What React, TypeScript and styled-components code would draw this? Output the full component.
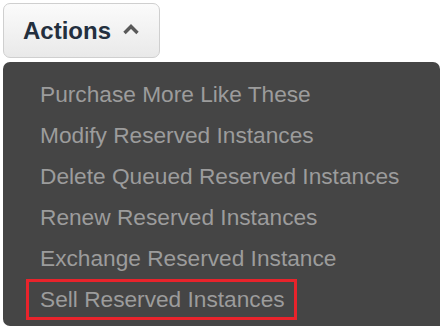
import React from "react";
import styled, { createGlobalStyle } from "styled-components";

const Global = createGlobalStyle`
  html, body { margin: 0; padding: 0; background: #ffffff; }
  body { font-family: "Liberation Sans", Arial, sans-serif; }
`;

const Page = styled.div`
  width: 440px;
  height: 326px;
  overflow: hidden;
  padding: 3px 0 0 3px;
  box-sizing: border-box;
  display: flex;
  flex-direction: column;
  gap: 4px;
`;

const Button = styled.button`
  width: 157px;
  height: 55px;
  box-sizing: border-box;
  border: 1px solid #cfcfcf;
  border-radius: 7px;
  background: linear-gradient(#fbfbfb, #e9e9e9);
  display: flex;
  align-items: center;
  padding: 0 0 0 19px;
  gap: 11px;
  font-family: "Liberation Sans", Arial, sans-serif;
  font-weight: bold;
  font-size: 24px;
  color: #232f3e;
  cursor: pointer;
`;

const Caret = styled.svg`
  width: 18px;
  height: 12px;
  margin-top: -3px;
`;

const Menu = styled.ul`
  list-style: none;
  margin: 0;
  padding: 12px 0 0 23px;
  flex: 1;
  width: 437px;
  box-sizing: border-box;
  background: #454545;
  border-radius: 7px 7px 0 7px;
  display: flex;
  flex-direction: column;
  align-items: flex-start;
`;

const Item = styled.li<{ $selected?: boolean }>`
  font-size: 22.7px;
  line-height: 41px;
  height: 41px;
  color: #9c9c9c;
  padding: 0 10px 0 14px;
  white-space: nowrap;
  outline: ${(p) => (p.$selected ? "3px solid #e8232b" : "none")};
  outline-offset: -3px;
  box-sizing: border-box;
  width: ${(p) => (p.$selected ? "271px" : "auto")};
`;

const items = [
  "Purchase More Like These",
  "Modify Reserved Instances",
  "Delete Queued Reserved Instances",
  "Renew Reserved Instances",
  "Exchange Reserved Instance",
  "Sell Reserved Instances",
];

export default function App() {
  return (
    <>
      <Global />
      <Page>
        <Button>
          Actions
          <Caret viewBox="0 0 18 12">
            <path d="M2.5 10 L9 3.5 L15.5 10" fill="none" stroke="#595959" strokeWidth="3.4" />
          </Caret>
        </Button>
        <Menu>
          {items.map((t, i) => (
            <Item key={t} $selected={i === items.length - 1}>
              {t}
            </Item>
          ))}
        </Menu>
      </Page>
    </>
  );
}
